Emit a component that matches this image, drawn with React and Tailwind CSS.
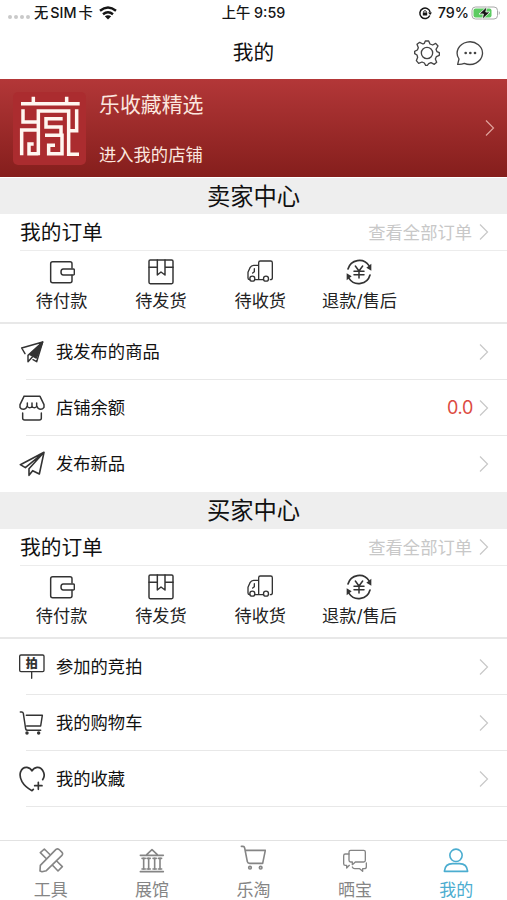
import React from 'react';
import clsx from 'clsx';

// All icons share a 78 unit grid drawn at 26px
function Icon({ children, className, stroke = 4.4 }) {
	return (
		<svg
			viewBox="0 0 78 78"
			fill="none"
			stroke="currentColor"
			strokeWidth={stroke}
			strokeLinecap="round"
			strokeLinejoin="round"
			className={clsx('h-[26px] w-[26px] shrink-0', className)}
		>
			{children}
		</svg>
	);
}

function Chevron({ className }) {
	return (
		<svg viewBox="0 0 10 18" fill="none" stroke="currentColor" strokeWidth="1.2" className={clsx('h-[18px] w-[10px] shrink-0', className)}>
			<path d="M1 1.5 8.5 9 1 16.5" />
		</svg>
	);
}

const WalletIcon = () => (
	<Icon>
		<path d="M69 27V14Q69 8 63 8H11Q5 8 5 14V65Q5 71 11 71H63Q69 71 69 65V49" />
		<path d="M73 30H43Q36 30 36 39T43 48H73Q76 48 76 45V33Q76 30 73 30Z" />
	</Icon>
);

const BoxIcon = () => (
	<Icon>
		<rect x="3" y="3" width="72" height="71" rx="4" />
		<path d="M3 25H28M51 25H75M28 3V48L39 39 51 48V3" />
	</Icon>
);

const TruckIcon = () => (
	<Icon stroke={4}>
		<path d="M23 62H35V11Q35 6 40 6H71Q76 6 76 11V57Q76 62 70 62M35 19H20Q13 19 9 26L3 40V57Q3 62 8 62M35 62H48" />
		<path d="M22 29V38L17 42" />
		<circle cx="16" cy="59" r="7.5" />
		<circle cx="57" cy="59" r="7.5" />
	</Icon>
);

const RefundIcon = () => (
	<Icon stroke={5} className="-translate-x-px">
		<path d="M6 30A35 35 0 0 1 69 20M72 48A35 35 0 0 1 9 58" />
		<path d="M76 14V35L61 26ZM2 64V43L17 52Z" fill="currentColor" stroke="none" />
		<path d="M28 21 39 36 50 21M39 36V57M24 37H54M24 47H54" strokeWidth="4.5" />
	</Icon>
);

const PublishedIcon = () => (
	<Icon stroke={4.4}>
		<path d="M18 44 8 27 71 9 53 68 42 62M71 9 27 49V68L40 54" />
		<path d="M71 9 33 47 52 57Z" fill="currentColor" />
	</Icon>
);

const ShopIcon = () => (
	<Icon>
		<path d="M15 4H63L75 29V37Q71 43 65 43 57 43 53 33V24M15 4 3 29V37Q6 43 13 43 21 43 25 33V24" />
		<path d="M25 34Q32 43 39 34V24M39 34Q46 43 53 34" />
		<path d="M11 54V70Q11 75 17 75H61Q67 75 67 70V54" />
	</Icon>
);

const SendIcon = () => (
	<Icon stroke={4.8}>
		<path d="M75 4 4 41 19 50 75 4 61 69 41 59 30 73V53L75 4" />
	</Icon>
);

const AuctionIcon = () => (
	<Icon stroke={4}>
		<rect x="2" y="3" width="73" height="50" rx="4" />
		<path d="M38 53V73" />
		<text x="38" y="41" fontSize="36" fontWeight="900" textAnchor="middle" fill="currentColor" stroke="none">
			拍
		</text>
	</Icon>
);

const CartIcon = () => (
	<Icon>
		<path d="M4 6H8Q12 6 13 10L20 57Q21 61 26 61H65M22 16H70L65 48H23" />
		<circle cx="24" cy="69" r="3" fill="currentColor" />
		<circle cx="59" cy="69" r="3" fill="currentColor" />
	</Icon>
);

const HeartIcon = () => (
	<Icon stroke={5}>
		<path d="M71 41Q79 30 73 17 67 3 54 4 44 5 39 15 34 5 24 4 10 3 5 17 0 30 9 47 18 63 39 74L43 70M58 49V70M47 59H69" />
	</Icon>
);

const ToolsIcon = () => (
	<Icon stroke={4.8}>
		<path d="M12 74 6 72 7 55 54 7Q60 3 65 9L72 16Q76 20 71 26L25 71ZM26 36 7 17 19 6 37 24M56 42 73 59 60 72 43 54" />
	</Icon>
);

const MuseumIcon = () => (
	<Icon stroke={4.8}>
		<path d="M4 25H73M23 23 39 8 55 23M4 74H73M9 66H19M24 66H34M42 66H52M58 66H68M9 34H19M24 34H34M42 34H52M58 34H68" />
		<path d="M14 34V66M29 34V66M47 34V66M63 34V66" />
	</Icon>
);

const TabCartIcon = () => (
	<Icon stroke={4.8}>
		<path d="M4 4H9Q13 4 14 9L22 50Q23 55 29 55H68L76 16H17" />
		<circle cx="30" cy="68" r="4" />
		<circle cx="62" cy="68" r="4" />
	</Icon>
);

const ChatsIcon = () => (
	<Icon stroke={4}>
		<path d="M26 10H65Q70 10 70 15V40Q70 45 65 45H40L31 53V45H26Q21 45 21 40V15Q21 10 26 10Z" />
		<path d="M21 21H10Q5 21 5 26V50Q5 55 10 55H14V63L22 55M31 60Q33 65 38 65H53L62 73V65H67Q73 65 73 59V48" />
	</Icon>
);

const UserIcon = () => (
	<Icon stroke={4.8}>
		<circle cx="39" cy="25" r="18.5" />
		<path d="M4 73Q6 50 29 50H49Q72 50 74 73Z" />
	</Icon>
);

const GearIcon = () => (
	<Icon stroke={4}>
		<circle cx="39" cy="39" r="17" />
		<path d="M34 3H44L48 12 56 15 65 10 72 18 66 28 69 35 76 38V46L67 50 64 57 68 67 61 73 51 68 44 71 40 76H35L31 69 24 66 14 70 7 62 11 52 9 45 2 41V34L10 30 13 23 9 13 17 7 27 12 31 10Z" />
	</Icon>
);

const MessageIcon = () => (
	<svg viewBox="0 0 84 78" fill="none" stroke="currentColor" strokeWidth="4" strokeLinejoin="round" className="h-[26px] w-[28px]">
		<path d="M5 73 9 57A38 34 0 1 1 25 70Q16 74 5 73Z" />
		<g fill="currentColor" stroke="none">
			<circle cx="29" cy="39" r="4" />
			<circle cx="43" cy="39" r="4" />
			<circle cx="57" cy="39" r="4" />
		</g>
	</svg>
);

function Logo() {
	return (
		<div className="h-[73px] w-[73px] shrink-0 rounded-[5px] bg-[#ab2c2f]">
			<svg viewBox="4 8 219 219" fill="none" stroke="#fff6f0" strokeWidth="10.5" className="h-full w-full">
				<path d="M28 43H204M65 22V43M165 22V43" />
				<path d="M34 60V98H80M30 198V122H80" />
				<path d="M80 198V65H171V195H202M80 193H52V164H66" />
				<path d="M195 60V124H171" />
				<path d="M153 88H103V113H148V138M100 138H151V193H111V168H130" />
			</svg>
		</div>
	);
}

const orderStates = [
	{ label: '待付款', icon: WalletIcon },
	{ label: '待发货', icon: BoxIcon },
	{ label: '待收货', icon: TruckIcon },
	{ label: '退款/售后', icon: RefundIcon },
];

const sellerRows = [
	{ label: '我发布的商品', icon: PublishedIcon },
	{ label: '店铺余额', icon: ShopIcon, value: '0.0' },
	{ label: '发布新品', icon: SendIcon },
];

const buyerRows = [
	{ label: '参加的竞拍', icon: AuctionIcon },
	{ label: '我的购物车', icon: CartIcon },
	{ label: '我的收藏', icon: HeartIcon },
];

const tabs = [
	{ label: '工具', icon: ToolsIcon },
	{ label: '展馆', icon: MuseumIcon },
	{ label: '乐淘', icon: TabCartIcon, raised: true },
	{ label: '晒宝', icon: ChatsIcon },
	{ label: '我的', icon: UserIcon, active: true },
];

function StatusBar() {
	return (
		<div className="grid h-[26px] grid-cols-3 items-center text-[14.3px] leading-none font-medium text-[#151515]">
			<div className="flex items-center pl-2">
				<div className="mt-2 mr-[4px] flex gap-[2px]">
					{[0, 1, 2, 3].map(i => (
						<span key={i} className="h-[4px] w-[4px] rounded-full bg-[#c9c9c9]"></span>
					))}
				</div>
				<span className="whitespace-nowrap">
					无<span className="mx-[2px]">SIM</span>卡
				</span>
				<svg viewBox="0 0 18 14" fill="none" stroke="currentColor" strokeWidth="2.4" className="ml-[6px] h-[14px] w-[18px]">
					<path d="M1 4.8Q9-1.8 17 4.8M4 8.3Q9 4.2 14 8.3" />
					<path d="M5.8 10.3Q9 8 12.2 10.3L9 13.5Z" fill="currentColor" stroke="none" />
				</svg>
			</div>
			<div className="text-center whitespace-nowrap">上午 9:59</div>
			<div className="flex items-center justify-end pr-[6px]">
				<svg viewBox="0 0 14 14" fill="none" stroke="currentColor" strokeWidth="1.5" className="mr-[6px] h-[14px] w-[14px]">
					<path d="M11.8 9.5A5.2 5.2 0 1 1 12.2 6.5" />
					<path d="M10 6.5H14L12.2 9Z" fill="currentColor" stroke="none" />
					<path d="M4.8 6.5H9.2V9.5H4.8Z" fill="currentColor" stroke="none" />
					<path d="M5.6 6.5V5.5Q7 3.6 8.4 5.5V6.5" strokeWidth="1" />
				</svg>
				<span>79%</span>
				<svg viewBox="0 0 30 16" className="ml-[2px] h-[16px] w-[30px]">
					<rect x="1" y="2" width="25.5" height="12" rx="3.5" fill="none" stroke="#a8a8a8" />
					<rect x="2.5" y="3.5" width="18" height="9" rx="2" fill="#5ccb62" />
					<path d="M27.8 6Q30 8 27.8 10Z" fill="#a8a8a8" />
					<path d="M16 1.6 8 9H12.4L11.2 14.4 19 7H14.8Z" fill="#151515" stroke="#fff" strokeWidth="0.8" />
				</svg>
			</div>
		</div>
	);
}

function Center({ title, rows, tall }) {
	return (
		<section>
			<h2 className={clsx('flex items-center justify-center bg-[#eeeeee] pt-px text-[23.3px] leading-none', tall ? 'h-[37px]' : 'h-[36px]')}>
				{title}
			</h2>
			<div className="ml-5 flex h-[37px] items-center border-b border-[#ececec] pr-[18px]">
				<span className="pt-[2px] text-[20.7px] leading-none">我的订单</span>
				<span className="mr-[7px] ml-auto pt-[2px] text-[17.3px] leading-none text-[#c8c8c8]">查看全部订单</span>
				<Chevron className="text-[#c8c8c8]" />
			</div>
			<div className="flex h-[73px] border-b-2 border-[#e8e8e8] pt-2 pl-3">
				{orderStates.map(({ label, icon: OrderIcon }) => (
					<div key={label} className="flex w-[99.3px] flex-col items-center gap-[7px] text-[#333]">
						<OrderIcon />
						<span className="text-[17.2px] leading-none whitespace-nowrap text-[#222]">{label}</span>
					</div>
				))}
			</div>
			{rows.map(({ label, icon: RowIcon, value }, i) => (
				<div key={label} className="flex h-[56px] items-center pl-[19px] text-[#333]">
					<RowIcon />
					<div
						className={clsx(
							'-ml-[19px] flex h-full flex-1 items-center border-b pr-[18px] pl-[30px]',
							i === rows.length - 1 && !tall ? 'border-transparent' : 'border-[#e8e8e8]'
						)}
					>
						<span className="pt-px text-[17.3px] leading-none text-[#111]">{label}</span>
						{value && <span className="mr-[6px] ml-auto pt-px text-[18px] leading-none tracking-[-0.3px] text-[#dc4a3f]">{value}</span>}
						<Chevron className={clsx('text-[#c8c8c8]', !value && 'ml-auto')} />
					</div>
				</div>
			))}
		</section>
	);
}

function App() {
	return (
		<div className="flex h-[900px] w-[507px] flex-col overflow-hidden bg-white font-['Inter','Noto_Sans_CJK_SC',sans-serif] text-[#111]">
			<StatusBar />
			<header className="grid h-[53px] grid-cols-[1fr_auto_1fr] items-center">
				<h1 className="col-start-2 pt-[2px] text-[20.7px] leading-none">我的</h1>
				<div className="flex items-center justify-end gap-[16px] pr-[23px] text-[#444]">
					<GearIcon />
					<MessageIcon />
				</div>
			</header>
			<div className="mb-px flex h-[98px] items-center bg-linear-to-b from-[#b33738] to-[#851e1c] pr-[12px] pl-[13px] text-[#fbe6df]">
				<Logo />
				<div className="ml-[13px] flex h-full flex-1 flex-col justify-between pt-[16px] pb-[14px]">
					<span className="text-[20.9px] leading-none">乐收藏精选</span>
					<span className="text-[17.3px] leading-none">进入我的店铺</span>
				</div>
				<Chevron className="text-[#e0a39d]" />
			</div>
			<Center title="卖家中心" rows={sellerRows} />
			<Center title="买家中心" rows={buyerRows} tall />
			<nav className="mt-auto grid h-[60px] grid-cols-5 border-t border-[#e2e2e2]">
				{tabs.map(({ label, icon: TabIcon, active, raised }) => (
					<div
						key={label}
						className={clsx('flex flex-col items-center justify-between pb-px', raised ? 'pt-[4px]' : 'pt-[6px]', active ? 'text-[#4badd0]' : 'text-[#858585]')}
					>
						<TabIcon />
						<span className="text-[17px] leading-none">{label}</span>
					</div>
				))}
			</nav>
		</div>
	);
}

export default App;
